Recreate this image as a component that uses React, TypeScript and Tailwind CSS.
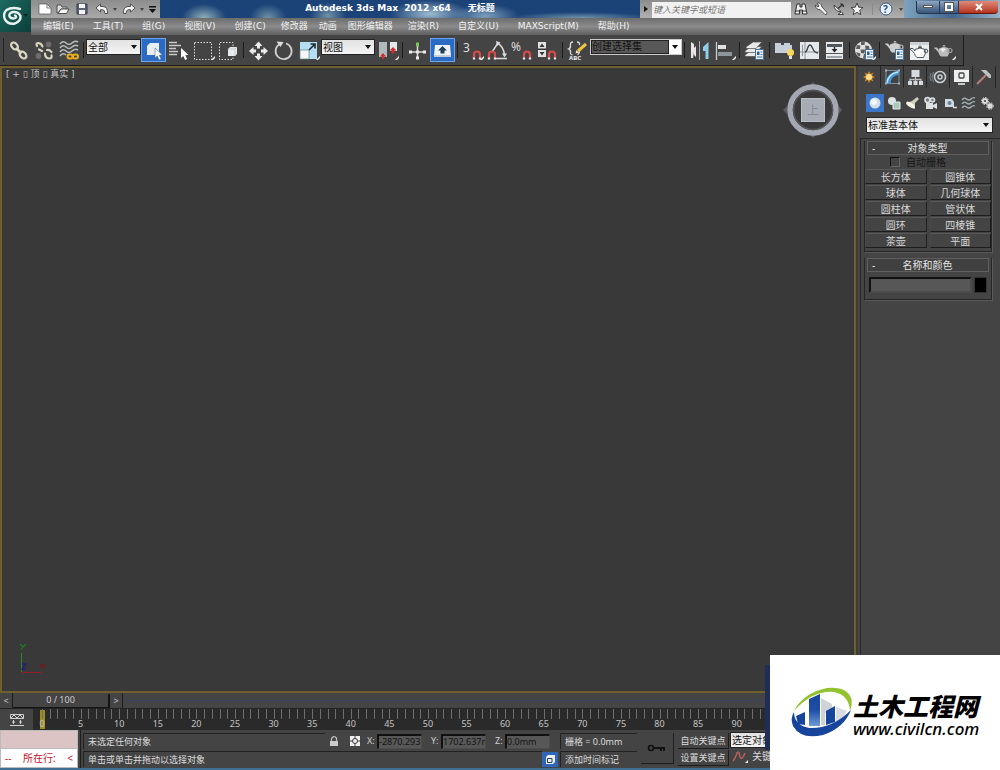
import { useState } from "react";
import type { ReactNode } from "react";
import clsx from "clsx";

// Items with an accelerator key get a little extra room on both sides
const menus = [
  { label: "编辑(E)", accel: true },
  { label: "工具(T)", accel: true },
  { label: "组(G)", accel: true },
  { label: "视图(V)", accel: true },
  { label: "创建(C)", accel: true },
  { label: "修改器" },
  { label: "动画" },
  { label: "图形编辑器" },
  { label: "渲染(R)", accel: true },
  { label: "自定义(U)", accel: true },
  { label: "MAXScript(M)", accel: true },
  { label: "帮助(H)", accel: true },
];

const objectTypes = [
  "长方体",
  "圆锥体",
  "球体",
  "几何球体",
  "圆柱体",
  "管状体",
  "圆环",
  "四棱锥",
  "茶壶",
  "平面",
];

const frames = Array.from({ length: 20 }, (_, i) => i * 5);

const cursor = "l0 10 l2.3 -2 l1.8 4 l2 -1 l-1.8 -3.8 l3 -0.4 Z";
const teapot =
  "M7 10.5 Q12 7.5 17 10.5 Q18.500 14 15.500 18.500 H9 Q7 17 6.500 14.500 L3.500 11 L2 10.500 L2.500 9.500 L5 9.500 L7 12 Z M10.500 8.500 A1.500 1.500 0 1 1 13.500 8.500 Z";

const flyout = <path d="M20 22 L24 18 V20 L22 22 Z" fill="#fff" />;
const magnet = (
  <g fill="none" strokeWidth="2.2">
    <path d="M14 21 V16.500 A3 3 0 0 1 20 16.500 V21" stroke="#d94a4a" />
    <path d="M14 19.500 V21.500 M20 19.500 V21.500" stroke="#eee" />
  </g>
);
const page = (
  <g>
    <rect x="13.500" y="11.500" width="8" height="10" fill="#eaf3fa" stroke="#4b7194" strokeWidth="1" />
    <path d="M15 13.500 H17.500 V17 H15 Z" fill="#2f5f92" />
    <path d="M18.500 14 H20.500 M18.500 16.500 H20.500 M15 19 H20.500" stroke="#4b7194" />
  </g>
);

// Main toolbar glyphs, drawn on a 25 x 25 grid
const glyphs: Record<string, ReactNode> = {
  link: (
    <g fill="none" stroke="#dcd8c2" strokeWidth="2.200">
      <ellipse cx="8.500" cy="8" rx="4" ry="2.700" transform="rotate(45 8.500 8)" />
      <ellipse cx="17" cy="17" rx="4" ry="2.700" transform="rotate(45 17 17)" />
      <path d="M10 10 L15.500 15.500" strokeWidth="2.600" />
    </g>
  ),
  unlink: (
    <g fill="none" stroke="#d8d4bd" strokeWidth="2.200" strokeLinecap="round">
      <path d="M6 8 Q4.500 5 7.500 5 Q10.500 5.500 11.500 8.500" />
      <path d="M14 15.500 Q14 20 18 20.500 Q21.500 20.500 20.500 17.500" />
      <path d="M8 11.500 L11 13 M16 12 Q19 11.500 20.500 14" />
      <circle cx="17.500" cy="6.500" r="1.800" stroke="#6d6a6a" fill="#7c7a7a" />
      <circle cx="7.500" cy="18" r="1.800" stroke="#6d6a6a" fill="#7c7a7a" />
    </g>
  ),
  bind: (
    <g fill="none">
      <path
        d="M4 6 Q7 2 10 5 T16 5 T22 4 M4 10 Q7 6 10 9 T16 9 T22 8 M4 14 Q7 10 10 13 T16 13 T22 12 M4 18 Q7 14 10 17"
        stroke="#b9bcbc"
        strokeWidth="1.600"
      />
      <rect x="11.500" y="16.500" width="5" height="4" rx="2" stroke="#e9ad22" strokeWidth="2" />
      <rect x="17" y="16.500" width="5" height="4" rx="2" stroke="#e9ad22" strokeWidth="2" />
    </g>
  ),
  select: (
    <g>
      <path d="M6 8 L9 5 H18 V14 L15 17 H6 Z" fill="#e9eef2" />
      <path d={"M14 10 " + cursor} fill="#fff" stroke="#4e6c92" strokeWidth="0.600" />
    </g>
  ),
  byName: (
    <g>
      <path d="M3 4.500 H11 M3 7.500 H15 M3 10.500 H10 M3 13.500 H12 M3 16.500 H11" stroke="#c9c9c9" strokeWidth="1.300" />
      <path d={"M15 10 " + cursor} fill="#fff" />
    </g>
  ),
  region: (
    <g>
      <rect x="3.500" y="4.500" width="17" height="17" fill="none" stroke="#ddd" strokeDasharray="1.500 1.500" />
      {flyout}
    </g>
  ),
  crossing: (
    <g>
      <path d="M17 8 V4.500 H3.500 V21.500 H17 V18" fill="none" stroke="#ddd" strokeDasharray="1.500 1.500" />
      <path d="M12 11 L14 9 H21 V16 L19 18 H12 Z" fill="#e6ebef" />
      <path d="M12 11 H19 V18 M19 11 L21 9" fill="none" stroke="#b5bfc8" strokeWidth="0.700" />
    </g>
  ),
  move: (
    <g fill="#ececec">
      <path d="M12.500 3.500 L16.500 8 H8.500 Z M12.500 22.500 L16.500 18 H8.500 Z M3 13 L7.500 9 V17 Z M22 13 L17.500 9 V17 Z" />
      <path d="M11 7.500 H14 V10.500 H11 Z M11 15.500 H14 V18.500 H11 Z M7 11.500 H10 V14.500 H7 Z M15 11.500 H18 V14.500 H15 Z" />
    </g>
  ),
  rotate: (
    <g>
      <path d="M9 6 A8 8 0 1 0 15 5.500" fill="none" stroke="#cfcfcf" strokeWidth="1.800" />
      <path d="M5.500 3.500 L12.500 4 L9.500 9 Z" fill="#ddd" />
    </g>
  ),
  scale: (
    <g>
      <rect x="4" y="4" width="17" height="17" fill="#b4def2" />
      <rect x="4" y="12" width="9" height="9" fill="#f4f6f7" stroke="#64808e" strokeWidth="0.700" />
      <path d="M13 12 L18.500 6.500 M14.500 6 H19 V10.500" fill="none" stroke="#1c2a33" strokeWidth="1.600" />
      {flyout}
    </g>
  ),
  pivot: (
    <g>
      <rect x="4" y="4" width="8" height="15" fill="#b2b9bd" />
      <rect x="15" y="4" width="7" height="9" fill="#e4e9ec" />
      <path d="M8 15 L11 18.500 H9 V21 H7 V18.500 H5 Z M18 9 L21.500 12.500 H19.500 V15.500 H16.500 V12.500 H14.500 Z" fill="#cc2d2d" />
      {flyout}
    </g>
  ),
  manipulate: (
    <g>
      <path d="M12.500 6 V20 M5 14 H20" stroke="#d8d8d8" strokeWidth="1.500" />
      <rect x="11" y="12.500" width="3" height="3" fill="#e8e8e8" />
      <path d="M4 12.500 H7 V15.500 H4 Z M18 12.500 H21 V15.500 H18 Z M11 18.500 H14 V21.500 H11 Z" fill="#ececec" />
      <rect x="11" y="4.500" width="3" height="4" fill="#78c850" />
    </g>
  ),
  keyboard: (
    <g>
      <path d="M5 7 H20 L21 18 H4 Z" fill="#f0f4f7" />
      <path d="M4 17 H21 V19 H4 Z" fill="#c1cdd8" />
      <path d="M12.500 8 L17 12.500 H14.500 V15.500 H10.500 V12.500 H8 Z" fill="#1f3c59" />
    </g>
  ),
  snap3: (
    <g>
      <text x="3" y="14" fontSize="12" fill="#ddd" fontFamily="Noto Sans">3</text>
      {magnet}
      {flyout}
    </g>
  ),
  snapAngle: (
    <g>
      <path d="M7 14 L13 5 M10 20.500 H22 M12 5 Q18.500 8 19.500 17" fill="none" stroke="#ddd" strokeWidth="1.400" />
      <path d="M11 3 L15.500 4.500 L12 8 Z M17 15.500 H22 L19.500 19.500 Z" fill="#ddd" />
      <g transform="translate(-10 0)">{magnet}</g>
    </g>
  ),
  snapPercent: (
    <g>
      <text x="1" y="13" fontSize="12" fill="#ddd" fontFamily="Noto Sans">%</text>
      {magnet}
    </g>
  ),
  snapSpinner: (
    <g>
      <rect x="3" y="4" width="8" height="15" fill="#e2e2e2" />
      <path d="M4.500 9 L7 5.500 L9.500 9 Z M4.500 14 L7 17.500 L9.500 14 Z M3 10.500 H11 V12 H3 Z" fill="#333" />
      {magnet}
    </g>
  ),
  namedSets: (
    <g>
      <path
        d="M8 4 Q5 4 5.500 7 Q6 10 3.500 11 Q6 12 5.500 14 Q5 16.500 7.500 17 M12 4 Q15 4 14.500 7 M14.500 12 Q14.500 16 12.500 16.500"
        fill="none"
        stroke="#ddd"
        strokeWidth="1.300"
      />
      <path d="M13 13 L21 6" stroke="#edc341" strokeWidth="3" />
      <path d="M10.500 15.500 L11.500 12 L14 14.500 Z" fill="#f4e2c4" />
      <text x="4" y="22" fontSize="6" fontWeight="700" fill="#eee" fontFamily="Noto Sans">ABC</text>
    </g>
  ),
  mirror: (
    <g>
      <path d="M4 4 L7 6 V10 L9 8 V19 L7 17 V14 L6 20 H4 Z" fill="#e6e6e6" />
      <path d="M12.500 3 V22" stroke="#aaa" />
      <path d="M21.500 4 L16 9 V13 H18.500 V21 H21.500 Z" fill="#8fcdec" />
    </g>
  ),
  align: (
    <g>
      <path d="M4.500 4 V22" stroke="#ccc" strokeWidth="1.300" />
      <rect x="6" y="7" width="8" height="4" fill="#dfe3e6" />
      <rect x="6" y="14" width="14" height="4" fill="#8d969d" />
      {flyout}
    </g>
  ),
  layers: (
    <g>
      <g fill="#e6e8ea" stroke="#4c4c4c" strokeWidth="0.700">
        <path d="M3 17 L9 12.500 H20 L14 18.500 H3 Z" />
        <path d="M3 13 L9 8.500 H20 L14 14.500 H3 Z" />
        <path d="M4 9 L11 4 H20 L14 10.500 H4 Z" />
      </g>
      {page}
    </g>
  ),
  ribbon: (
    <g>
      <path d="M3 7 V5 H9 V7 H12 V5 H18 V7 H20 V15 H3 Z" fill="#c6d0da" />
      <circle cx="18.500" cy="14.500" r="3.500" fill="#f8d95f" />
      <path d="M17 18 H20 V21 H17 Z" fill="#ddd" />
    </g>
  ),
  curve: (
    <g>
      <rect x="3" y="4" width="19" height="17" fill="#e4e8ea" />
      <path d="M8 4 V21 M3 14 H22 M5.500 7 V18" stroke="#8d969a" />
      <path d="M8 14 C11 14 10 7 13 7 S15 15 21 15" fill="none" stroke="#39434a" strokeWidth="1.300" />
    </g>
  ),
  schematic: (
    <g>
      <rect x="4" y="4" width="17" height="17" fill="#e8ebec" />
      <path d="M5 6 H20 V9 H5 Z M4 15 H21 V16 H4 Z" fill="#4f575c" />
      <path d="M12.500 9 V12" stroke="#333" strokeWidth="1.500" />
      <path d="M9.500 11 H15.500 L12.500 14.500 Z" fill="#222" />
      <path d="M5 18 H20 V20 H5 Z" fill="#9aa3a8" />
    </g>
  ),
  material: (
    <g>
      <circle cx="11.500" cy="12" r="8.500" fill="#e2e2e2" />
      <path
        d="M9 3.500 L13 3.500 L12.500 7 L9 7 Z M5 7 L8.500 7.500 L8 11 L4 11 Z M13 7.500 L17 8 L17.500 11.500 L13.500 11 Z M8.500 11.500 L13 11.500 L12.500 15.500 L9 15 Z M4 14 L8.500 15.500 L8 18.500 L6 18 Z M12 16 L15 16 L14 20 L11 20 Z"
        fill="#5d5d5d"
      />
      {page}
      {flyout}
    </g>
  ),
  renderSetup: (
    <g>
      <path d={teapot} fill="#cfcfcf" transform="translate(1 -4)" />
      <circle cx="19" cy="9" r="2" fill="none" stroke="#bbb" strokeWidth="1.200" />
      {page}
    </g>
  ),
  frame: (
    <g>
      <rect x="3" y="4" width="19" height="18" fill="#eceff0" />
      <path d="M3 4 H22 V7 H3 Z" fill="#cbd1d4" />
      <path d={teapot} fill="#fff" stroke="#4c555a" strokeWidth="1" transform="translate(1 1)" />
      <circle cx="19" cy="13" r="1.800" fill="none" stroke="#4c555a" />
    </g>
  ),
  render: (
    <g>
      <path d={teapot} fill="#bdbdbd" />
      <path d="M8 11 Q11 9.500 14 11 L11 14 Z" fill="#efefef" />
      <circle cx="18" cy="12.500" r="2" fill="none" stroke="#9c9c9c" strokeWidth="1.200" />
      {flyout}
    </g>
  ),
};

function Tool({ name, title, active }: { name: string; title: string; active?: boolean }) {
  return (
    <button
      title={title}
      aria-label={title}
      className={clsx("h-6 w-[25px] shrink-0", active && "border border-[#6aa5ee] bg-[#2c6bc4]")}
    >
      <svg viewBox="0 0 25 25" className={clsx("h-[25px] w-[25px]", active && "-m-px")}>
        {glyphs[name]}
      </svg>
    </button>
  );
}

function Divider() {
  return (
    <div className="flex h-6 w-[5px] shrink-0 justify-center">
      <div className="my-1 w-px bg-[#1c1c1c]" />
    </div>
  );
}

function Dropdown({ label, options, className }: { label: string; options: string[]; className: string }) {
  return (
    <div className={clsx("relative shrink-0", className)}>
      <select
        aria-label={label}
        className="block h-full w-full appearance-none border border-[#222] bg-linear-to-b from-[#e2e2e2] to-[#f4f4f4] pl-px text-[10px] leading-3 text-[#111]"
      >
        {options.map((o) => (
          <option key={o}>{o}</option>
        ))}
      </select>
      <svg viewBox="0 0 6 4" className="pointer-events-none absolute top-1/2 right-1 h-1 w-1.5 -translate-y-1/2">
        <path d="M0 0 H6 L3 4 Z" fill="#111" />
      </svg>
    </div>
  );
}

function BarButton({ title, width, children }: { title: string; width: string; children: ReactNode }) {
  return (
    <button title={title} aria-label={title} className={clsx("flex h-full items-center justify-center", width)}>
      {children}
    </button>
  );
}

function Caret() {
  return (
    <svg viewBox="0 0 4 3" className="h-[3px] w-1">
      <path d="M0 0 H4 L2 3 Z" fill="#444" />
    </svg>
  );
}

function TitleBar() {
  return (
    <div className="flex h-[18px] items-stretch">
      <div className="flex w-[129px] shrink-0 items-center bg-linear-to-b from-[#8d8d8d] to-[#a9a9a9] pl-[5px]">
        <BarButton title="新建" width="w-[18px]">
          <svg viewBox="0 0 14 12" className="h-3 w-3.5">
            <path d="M1 1 H9 L13 5 V11 H1 Z" fill="#fff" stroke="#555" strokeWidth="0.700" />
            <path d="M9 1 V5 H13" fill="none" stroke="#777" />
          </svg>
        </BarButton>
        <BarButton title="打开" width="w-[19px]">
          <svg viewBox="0 0 14 12" className="h-3 w-3.5">
            <path d="M1 10 V2 H5 L6 4 H11 V6 H5 L2 10 Z" fill="#ddd" stroke="#444" strokeWidth="0.900" />
            <path d="M2 10.500 L5 6 H13 L10.500 10.500 Z" fill="#f6f6f6" stroke="#444" strokeWidth="0.900" />
          </svg>
        </BarButton>
        <BarButton title="保存" width="w-[19px]">
          <svg viewBox="0 0 12 12" className="h-3 w-3">
            <path d="M1 1 H11 V11 H1 Z" fill="#5b6472" stroke="#333b49" />
            <path d="M3 1 H9 V5 H3 Z M3 7 H9 V11 H3 Z" fill="#f4f4f4" />
          </svg>
        </BarButton>
        <BarButton title="撤消" width="w-[22px]">
          <svg viewBox="0 0 14 12" className="h-3 w-3.5">
            <path d="M1 5 L5.500 1 V3.500 H8 Q13 4 12.500 10.500 H10 Q10 7 7.500 6.700 H5.500 V9 Z" fill="#f4f4f4" stroke="#444" strokeWidth="0.900" />
          </svg>
        </BarButton>
        <Caret />
        <BarButton title="重做" width="w-6">
          <svg viewBox="0 0 14 12" className="h-3 w-3.5">
            <path d="M13 5 L8.500 1 V3.500 H6 Q1 4 1.500 10.500 H4 Q4 7 6.500 6.700 H8.500 V9 Z" fill="#f4f4f4" stroke="#444" strokeWidth="0.900" />
          </svg>
        </BarButton>
        <Caret />
        <BarButton title="自定义快速访问工具栏" width="w-4">
          <svg viewBox="0 0 7 7" className="h-[7px] w-[7px]">
            <path d="M0 0 H7 V1.500 H0 Z M0 3 H7 L3.500 7 Z" fill="#111" />
          </svg>
        </BarButton>
      </div>
      <h1 className="flex min-w-0 flex-1 items-center justify-center gap-[17px] bg-[#1c4378] bg-[radial-gradient(ellipse_22px_14px_at_44px_18px,#8fb0b8,transparent),radial-gradient(ellipse_18px_14px_at_108px_18px,#6f92a6,transparent),radial-gradient(ellipse_18px_14px_at_168px_16px,#6f92a6,transparent),radial-gradient(ellipse_40px_14px_at_270px_14px,#9dbccf,transparent),radial-gradient(ellipse_34px_12px_at_325px_16px,#7d9fbc,transparent),radial-gradient(ellipse_70px_6px_at_420px_18px,#6f95ad,transparent)] font-['DejaVu_Sans','Noto_Sans_CJK_SC',sans-serif] text-[9px] font-bold text-white">
        <span className="whitespace-pre">{"Autodesk 3ds Max  2012 x64"}</span>
        <span>无标题</span>
      </h1>
      <div className="flex w-[264px] shrink-0 items-center bg-linear-to-b from-[#8d8d8d] to-[#b0b0b0]">
        <BarButton title="信息中心" width="w-3">
          <svg viewBox="0 0 4 6" className="h-1.5 w-1">
            <path d="M0 0 L4 3 L0 6 Z" fill="#111" />
          </svg>
        </BarButton>
        <input
          aria-label="搜索"
          placeholder="键入关键字或短语"
          className="mt-px h-4 w-[139px] bg-[#f1f1f1] pl-px text-[9px] italic placeholder:text-[#777]"
        />
        <BarButton title="搜索" width="w-5">
          <svg viewBox="0 0 14 14" className="h-3.5 w-3.5">
            <path d="M3 2 H6 V5 H8 V2 H11 L13 12 H8.500 V8 H5.500 V12 H1 Z" fill="#eee" stroke="#333" />
            <path d="M1.500 9 H5.500 M8.500 9 H12.500" stroke="#333" />
          </svg>
        </BarButton>
        <BarButton title="速博应用中心" width="w-[19px]">
          <svg viewBox="0 0 14 14" className="h-3.5 w-3.5">
            <path d="M1 3 L4 5 L5 4 L3 1 Q7 0 8 5 L13 10.500 Q13 13 11 12.500 L6 7.500 Q2 8 1 3 Z" fill="#f4f4f4" stroke="#444" strokeWidth="0.900" />
          </svg>
        </BarButton>
        <BarButton title="通讯中心" width="w-[18px]">
          <svg viewBox="0 0 14 14" className="h-3.5 w-3.5">
            <path d="M2 3 Q2 9 9 10 L6 12.500 H11.500 L9 9.500 Z" fill="#f4f4f4" stroke="#333" strokeWidth="0.900" />
            <path d="M6 6.500 L10 3 M8.500 2 Q11.500 2 11.500 5" fill="none" stroke="#333" strokeWidth="1.300" />
          </svg>
        </BarButton>
        <BarButton title="收藏夹" width="w-[18px]">
          <svg viewBox="0 0 14 14" className="h-3.5 w-3.5">
            <path d="M7 1 L8.700 5.200 L13 5.500 L9.700 8.300 L10.800 12.700 L7 10.300 L3.200 12.700 L4.300 8.300 L1 5.500 L5.300 5.200 Z" fill="#f4f4f4" stroke="#444" />
          </svg>
        </BarButton>
        <div className="ml-1.5 h-3 w-px bg-[#8a8a8a]" />
        <BarButton title="帮助" width="w-[26px]">
          <svg viewBox="0 0 14 14" className="h-3.5 w-3.5">
            <circle cx="7" cy="7" r="6" fill="#e9f1fa" stroke="#3b5c86" />
            <text x="4" y="11" fontSize="10" fontWeight="700" fill="#1f4e8c" fontFamily="Noto Sans">?</text>
          </svg>
        </BarButton>
        <Caret />
      </div>
      <div className="flex w-24 shrink-0 items-start bg-linear-to-r from-[#7fa3bd] via-[#41658f] to-[#9ab4c6] pr-0.5 pl-3">
        <BarButton title="最小化" width="w-6">
          <span className="mb-1 flex h-[13px] w-full items-center justify-center rounded-bl border border-t-0 border-[#26384f] bg-linear-to-b from-[#8fa6c0] to-[#38557c]">
            <span className="h-[3px] w-2.5 border border-[#555] bg-white" />
          </span>
        </BarButton>
        <BarButton title="还原" width="w-[19px]">
          <span className="mb-1 flex h-[13px] w-full items-center justify-center border-r border-b border-[#26384f] bg-linear-to-b from-[#8fa6c0] to-[#38557c]">
            <span className="h-2 w-2 border-2 border-white outline outline-[#555]" />
          </span>
        </BarButton>
        <BarButton title="关闭" width="w-[39px]">
          <span className="mb-1 flex h-[13px] w-full items-center justify-center rounded-br border-b border-[#5c1a12] bg-linear-to-b from-[#dd8a79] to-[#b5301a]">
            <svg viewBox="0 0 8 8" className="h-2 w-2">
              <path d="M1 1 L7 7 M7 1 L1 7" stroke="#fff" strokeWidth="2" />
            </svg>
          </span>
        </BarButton>
      </div>
    </div>
  );
}

function Header() {
  return (
    <header className="flex">
      <button
        aria-label="应用程序菜单"
        className="flex h-8 w-[31px] shrink-0 items-center justify-center bg-linear-to-br from-[#1c6b60] to-[#0c3f3b]"
      >
        <svg viewBox="0 0 31 32" className="h-8 w-[31px]">
          <path
            d="M20 9 Q12 6.500 6.500 10 Q2.500 14 5 19.500 Q8.500 25 15 23.500 Q21 21 20.500 16 Q18.500 11.500 13 12 Q8.500 13 9.500 16.500 Q11.500 19.500 15.500 18 Q17 16.500 15 15.500"
            fill="none"
            stroke="#e8f3ef"
            strokeWidth="2.400"
            strokeLinecap="round"
          />
          <path d="M23.500 14 H28 L25.750 17 Z" fill="#0a2320" />
        </svg>
      </button>
      <div className="min-w-0 flex-1">
        <TitleBar />
        <nav className="flex h-[17px] items-center gap-[11px] bg-linear-to-b from-[#6d6d6d] via-[#8b8b8b] to-[#5f5f5f] pl-2 font-['DejaVu_Sans','Noto_Sans_CJK_SC',sans-serif] text-[9px] whitespace-nowrap text-[#f2f2f2]">
          {menus.map((m) => (
            <button key={m.label} className={clsx(m.accel && "px-1")}>
              {m.label}
            </button>
          ))}
        </nav>
      </div>
    </header>
  );
}

function Toolbar() {
  return (
    <div className="flex h-[31px] items-center bg-[#444]">
      <div className="flex h-full w-[964px] items-center border-r border-b border-[#1d1d1d]">
        <div className="mr-0.5 ml-[3px] h-6 w-px bg-[#222]" />
        <Tool name="link" title="选择并链接" />
        <Tool name="unlink" title="断开当前选择链接" />
        <Tool name="bind" title="绑定到空间扭曲" />
        <Divider />
        <Dropdown label="选择过滤器" options={["全部"]} className="mb-[7px] h-4 w-[55px]" />
        <Tool name="select" title="选择对象" active />
        <Tool name="byName" title="按名称选择" />
        <Tool name="region" title="矩形选择区域" />
        <Tool name="crossing" title="窗口/交叉" />
        <Divider />
        <Tool name="move" title="选择并移动" />
        <Tool name="rotate" title="选择并旋转" />
        <Tool name="scale" title="选择并均匀缩放" />
        <Dropdown label="参考坐标系" options={["视图"]} className="mb-[7px] h-4 w-[54px]" />
        <Tool name="pivot" title="使用轴点中心" />
        <Divider />
        <Tool name="manipulate" title="选择并操纵" />
        <Tool name="keyboard" title="键盘快捷键覆盖切换" active />
        <Divider />
        <Tool name="snap3" title="捕捉开关" />
        <Tool name="snapAngle" title="角度捕捉切换" />
        <Tool name="snapPercent" title="百分比捕捉切换" />
        <Tool name="snapSpinner" title="微调器捕捉切换" />
        <Divider />
        <Tool name="namedSets" title="编辑命名选择集" />
        <div className="mb-[7px] flex h-4 w-[92px] shrink-0 border border-[#ccc] bg-[#585858]">
          <input
            aria-label="命名选择集"
            defaultValue="创建选择集"
            className="min-w-0 flex-1 border border-[#222] text-[10px] text-[#111]"
          />
          <button aria-label="展开选择集" className="flex w-3 items-center justify-center bg-white">
            <svg viewBox="0 0 6 4" className="h-1 w-1.5">
              <path d="M0 0 H6 L3 4 Z" fill="#111" />
            </svg>
          </button>
        </div>
        <Divider />
        <Tool name="mirror" title="镜像" />
        <Tool name="align" title="对齐" />
        <Divider />
        <Tool name="layers" title="层管理器" />
        <Divider />
        <Tool name="ribbon" title="石墨建模工具" />
        <Tool name="curve" title="曲线编辑器" />
        <Tool name="schematic" title="图解视图" />
        <Divider />
        <Tool name="material" title="材质编辑器" />
        <Divider />
        <Tool name="renderSetup" title="渲染设置" />
        <Tool name="frame" title="渲染帧窗口" />
        <Tool name="render" title="渲染产品" />
      </div>
    </div>
  );
}

function Viewport() {
  return (
    <main className="relative min-w-0 flex-1 border-2 border-[#70602c] bg-[#393939]">
      <p className="px-1 font-['DejaVu_Sans','Noto_Sans_CJK_SC',sans-serif] text-[9px] leading-3 text-[#c4c4c4]">
        [ + ▯ 顶 ▯ 真实 ]
      </p>
      {/* ViewCube */}
      <svg viewBox="0 0 60 60" className="absolute top-3 right-3 h-[60px] w-[60px]">
        <path d="M31 2 L35 6 H27 Z M31 58 L35 54 H27 Z M1 30 L5 26 V34 Z M60 30 L57 26 V34 Z" fill="#5b5d63" />
        <circle cx="31" cy="30" r="23" fill="none" stroke="#a4a8b2" strokeWidth="5.500" />
        <circle cx="31" cy="30" r="19.500" fill="none" stroke="#55575a" strokeWidth="1.500" />
        <rect x="19.500" y="18.500" width="23" height="23" fill="#a6abb4" stroke="#b9bdc5" strokeWidth="1" />
        <text x="25" y="35" fontSize="12" fill="#858b97" fontFamily="Noto Sans CJK SC">上</text>
      </svg>
      {/* World axis */}
      <svg viewBox="0 0 30 34" className="absolute bottom-4 left-4 h-[34px] w-[30px]">
        <path d="M3.500 12 V31" stroke="#2a8a2a" />
        <path d="M4 31.500 H24" stroke="#8f1d22" />
        <path d="M2 3 L5 6 L8 3 M5 6 L3 9" fill="none" stroke="#1c7a22" strokeWidth="1.300" />
        <path d="M22 23 L27 27 M27 23 L22 27" fill="none" stroke="#74191d" strokeWidth="1.300" />
        <path d="M4 23 H8 L4 28 H8" fill="none" stroke="#20207a" strokeWidth="1.300" />
      </svg>
    </main>
  );
}

const panelTabs: { title: string; icon: ReactNode }[] = [
  {
    title: "创建",
    icon: (
      <g>
        <path d="M10 4 L11.500 7 L14.500 5.500 L13 8.500 L16 10 L13 11.500 L14.500 14.500 L11.500 13 L10 16 L8.500 13 L5.500 14.500 L7 11.500 L4 10 L7 8.500 L5.500 5.500 L8.500 7 Z" fill="#d98a2b" />
        <circle cx="10" cy="10" r="3" fill="#ffe08a" />
      </g>
    ),
  },
  {
    title: "修改",
    icon: (
      <g>
        <rect x="4" y="3.500" width="13" height="13" fill="none" stroke="#7f8f9c" />
        <path d="M4 16.500 Q4 5.500 17 3.500 V7.500 Q8.500 9 8.500 16.500 Z" fill="#3f98dc" />
        <path d="M5 16 Q6 7 16 5" fill="none" stroke="#c4e4fa" strokeWidth="1.300" />
        <path d="M3 2.500 H5 V4.500 H3 Z M16 2.500 H18 V4.500 H16 Z M3 15.500 H5 V17.500 H3 Z M16 15.500 H18 V17.500 H16 Z" fill="#a9b4bd" />
      </g>
    ),
  },
  {
    title: "层次",
    icon: (
      <g fill="#d5dade">
        <rect x="6.500" y="3" width="8" height="7" />
        <path d="M10.500 10 V14 M5 15 V12.500 H16 V15" fill="none" stroke="#bbb" strokeWidth="1.300" />
        <path d="M3 14 H7 V18 H3 Z M8.500 14 H12.500 V18 H8.500 Z M14 14 H18 V18 H14 Z" />
      </g>
    ),
  },
  {
    title: "运动",
    icon: (
      <g fill="none" stroke="#c6ccd2">
        <circle cx="12" cy="10" r="5.500" strokeWidth="1.600" />
        <circle cx="12" cy="10" r="2" strokeWidth="1.600" />
        <path d="M5.500 5 Q3 10 5.500 15 M3 6 Q1 10 3 14" stroke="#7e868d" />
      </g>
    ),
  },
  {
    title: "显示",
    icon: (
      <g>
        <rect x="3" y="3" width="15" height="12" fill="#eceff0" />
        <rect x="8" y="6" width="5" height="5" rx="1" fill="none" stroke="#444" strokeWidth="1.300" />
        <path d="M7 16 H14 V18 H7 Z" fill="#c5cacd" />
      </g>
    ),
  },
  {
    title: "工具",
    icon: (
      <g>
        <path d="M3 17 L12 8" stroke="#b87f78" strokeWidth="2" />
        <path d="M7 3 L12 3 L17 8 L17 11 L15 11 L11 7 Z" fill="#bfc3c6" />
      </g>
    ),
  },
];

const categories: { title: string; icon: ReactNode }[] = [
  {
    title: "几何体",
    icon: (
      <g>
        <circle cx="9" cy="9" r="5.500" fill="#d3dee9" />
        <circle cx="8" cy="8" r="3" fill="#f6f9fb" />
      </g>
    ),
  },
  {
    title: "图形",
    icon: (
      <g>
        <circle cx="7" cy="7" r="4" fill="#dde3e7" />
        <path d="M8 8 H15 V15 H8 Z" fill="#a9c9b9" stroke="#e6ebee" />
      </g>
    ),
  },
  {
    title: "灯光",
    icon: (
      <g>
        <path d="M14 3 L16 5 L12 9 L12 15 L3 9 L9 7 Z" fill="#d0cdba" />
        <ellipse cx="7.500" cy="11" rx="5" ry="2" fill="#f7f5e6" transform="rotate(35 7.500 11)" />
      </g>
    ),
  },
  {
    title: "摄影机",
    icon: (
      <g>
        <path d="M4 9 H11 V15 H4 Z M11 11 L15 9 V15 L11 13 Z" fill="#dde1e4" />
        <circle cx="5.500" cy="6" r="2.500" fill="#777" stroke="#dde1e4" strokeWidth="1.600" />
        <circle cx="10.500" cy="6" r="2" fill="#777" stroke="#dde1e4" strokeWidth="1.600" />
      </g>
    ),
  },
  {
    title: "辅助对象",
    icon: (
      <g>
        <path d="M4 5 H11 L13 8 V13 H4 Z" fill="#cfd9e2" />
        <circle cx="8.500" cy="9" r="2" fill="#6c8296" />
        <path d="M12 13.500 H16" stroke="#ddd" strokeWidth="1.500" />
      </g>
    ),
  },
  {
    title: "空间扭曲",
    icon: (
      <path
        d="M3 6 Q5 3 7.500 5 T12 5 T16 4 M3 10 Q5 7 7.500 9 T12 9 T16 8 M3 14 Q5 11 7.500 13 T12 13 T16 12"
        fill="none"
        stroke="#a7b1b6"
        strokeWidth="1.300"
      />
    ),
  },
  {
    title: "系统",
    icon: (
      <g fill="none" stroke="#dcdcdc">
        <circle cx="7" cy="7" r="2" strokeWidth="2" />
        <circle cx="7" cy="7" r="3.500" strokeDasharray="1.500 1.200" />
        <circle cx="12" cy="12" r="1.500" strokeWidth="2.500" />
        <circle cx="12" cy="12" r="3.300" strokeDasharray="1.500 1.200" />
      </g>
    ),
  },
];

function Rollout({ title, children }: { title: string; children: ReactNode }) {
  return (
    <section className="border border-t-0 border-[#262626] shadow-[1px_1px_0_#5a5a5a]">
      <h2 className="mx-0.5">
        <button className="flex h-3.5 w-full items-center border border-[#5f5f5f] bg-[#404040] px-1 text-[10px] leading-3 text-[#e4e4e4]">
          <span>-</span>
          <span className="flex-1 pr-1 text-center">{title}</span>
        </button>
      </h2>
      {children}
    </section>
  );
}

function CommandPanel() {
  const [category, setCategory] = useState("几何体");
  return (
    <aside className="flex w-[144px] shrink-0 flex-col border-l-2 border-[#3c3c3c] bg-[#444]">
      <div className="flex h-[22px]">
        {panelTabs.map((t) => (
          <button
            key={t.title}
            title={t.title}
            aria-label={t.title}
            className="flex w-[23px] items-center justify-center border-r border-[#262626]"
          >
            <svg viewBox="0 0 20 20" className="h-5 w-5">
              {t.icon}
            </svg>
          </button>
        ))}
      </div>
      <div className="mt-1.5 flex justify-between pr-1 pl-2">
        {categories.map((c) => (
          <button
            key={c.title}
            title={c.title}
            aria-label={c.title}
            onClick={() => setCategory(c.title)}
            className={clsx("h-[18px] w-[18px]", category === c.title && "bg-[#3b76c9]")}
          >
            <svg viewBox="0 0 18 18" className="h-[18px] w-[18px]">
              {c.icon}
            </svg>
          </button>
        ))}
      </div>
      <Dropdown label="对象类别" options={["标准基本体"]} className="mt-[5px] mr-[7px] ml-2 h-4" />
      <div className="mt-[5px] ml-0.5 flex flex-1 flex-col gap-1.5 border-t border-l border-[#2a2a2a] pt-0.5 pr-2 pl-[3px]">
        <Rollout title="对象类型">
          <label className="flex h-3.5 items-center justify-center gap-1.5 pr-5 text-[10px] text-[#161616]">
            <input
              type="checkbox"
              className="h-2.5 w-2.5 appearance-none border border-t-[#111] border-r-[#666] border-b-[#666] border-l-[#111]"
            />
            自动栅格
          </label>
          <div className="grid grid-cols-2 gap-x-[3px] gap-y-px pb-[3px]">
            {objectTypes.map((o) => (
              <button
                key={o}
                className="h-[15px] border border-t-[#585858] border-r-[#1d1d1d] border-b-[#1d1d1d] border-l-[#4a4a4a] text-[10px] leading-3 text-[#d8d8d8]"
              >
                {o}
              </button>
            ))}
          </div>
        </Rollout>
        <Rollout title="名称和颜色">
          <div className="flex gap-0.5 p-1 pt-[5px] pb-1.5">
            <input
              aria-label="名称"
              className="h-4 min-w-0 flex-1 border-2 border-t-[#111] border-r-[#4c4c4c] border-b-[#4c4c4c] border-l-[#111] bg-[#575757]"
            />
            <button aria-label="颜色" className="h-4 w-[13px] border border-[#333] bg-black" />
          </div>
        </Rollout>
      </div>
    </aside>
  );
}

function TimeSlider() {
  return (
    <div className="flex h-4 items-center border-b border-[#222] bg-[#444] text-[9px] leading-3 text-[#ccc]">
      <button aria-label="上一帧" className="h-full w-[13px] border-r border-[#1d1d1d]">
        &lt;
      </button>
      <button className="h-3.5 w-[97px] border-r-2 border-b border-[#151515]">0 / 100</button>
      <button aria-label="下一帧" className="h-full w-[13px] border-r border-[#1d1d1d]">
        &gt;
      </button>
      <div className="h-px flex-1 bg-[#3d425c]" />
    </div>
  );
}

function TrackBar() {
  return (
    <div className="flex h-[21px] bg-[#2a2a2a]">
      <button aria-label="迷你曲线编辑器" className="flex w-[33px] items-center justify-center bg-[#444]">
        <svg viewBox="0 0 16 14" className="h-3.5 w-4">
          <path d="M1.500 1.500 H14.500 V5.500 H1.500 Z M2 5 L5 2 L8 5 L11 2 L14 5 M1 12.500 H15 M4.500 7 V11 M11.500 7 V11 M3 9 H6 M10 9 H13" fill="none" stroke="#d0d0d0" strokeWidth="1" />
        </svg>
      </button>
      <div className="relative mr-[186px] ml-[9px] flex flex-1">
        <div className="absolute top-px bottom-px -left-0.5 w-[5px] bg-[#9d8c20]" />
        {frames.map((f) => (
          <div key={f} className="relative flex-1 text-[9px] leading-[9px] text-[#c4c4c4]">
            <div className="flex h-2.5">
              {[0, 1, 2, 3, 4].map((t) => (
                <div key={t} className="flex-1 border-l border-[#6e6e6e]" />
              ))}
            </div>
            <span className="inline-block -translate-x-1/2">{f}</span>
          </div>
        ))}
      </div>
    </div>
  );
}

function Coordinate({ axis, value }: { axis: string; value: string }) {
  return (
    <label className="flex items-center gap-px text-[#d0d0d0]">
      <span className="w-[9px]">{axis}:</span>
      <input
        defaultValue={value}
        className="h-[15px] w-[45px] border border-t-2 border-l-2 border-t-[#111] border-r-[#4c4c4c] border-b-[#4c4c4c] border-l-[#111] bg-[#575757] text-[#161616]"
      />
    </label>
  );
}

function StatusBar() {
  return (
    <footer className="flex h-[38px] bg-[#444] text-[9px] leading-3 whitespace-nowrap text-[#dcdcdc]">
      <div className="flex w-[78px] shrink-0 flex-col gap-px border border-[#bbb] bg-[#bbb]">
        <div className="h-[17px] bg-[#dcc3c4]" />
        <div className="flex flex-1 items-center justify-between bg-white px-1 text-[10px] text-[#c8102e]">
          <span>--</span>
          <span>所在行:</span>
          <span>&lt;</span>
        </div>
      </div>
      <div className="mx-0.5 w-px shrink-0 bg-[#1d1d1d]" />
      <div className="flex w-[477px] shrink-0 flex-col pt-0.5">
        <div className="flex h-[18px] items-center">
          <p className="mr-1 h-4 w-[242px] border-t border-l border-[#222] px-1 leading-4">未选定任何对象</p>
          <button aria-label="选择锁定切换">
            <svg viewBox="0 0 10 12" className="h-3 w-2.5">
              <path d="M2.500 6 V3.500 Q5 0 7.500 3 V6" fill="none" stroke="#bbb" strokeWidth="1.300" />
              <path d="M1 6 H9 V11 H1 Z" fill="#ccc" />
            </svg>
          </button>
          <button aria-label="绝对模式变换输入" className="mr-1.5 ml-2.5">
            <svg viewBox="0 0 12 12" className="h-3 w-3">
              <rect x="1" y="1" width="10" height="10" fill="#eee" />
              <circle cx="6" cy="6" r="2.500" fill="none" stroke="#333" />
              <path d="M6 0 V3 M6 9 V12 M0 6 H3 M9 6 H12" stroke="#444" />
            </svg>
          </button>
          <div className="flex gap-[9px]">
            <Coordinate axis="X" value="-2870.293mm" />
            <Coordinate axis="Y" value="1702.637mm" />
            <Coordinate axis="Z" value="0.0mm" />
          </div>
        </div>
        <div className="flex flex-1 items-center">
          <p className="h-4 flex-1 border-t border-l border-[#222] px-1 leading-4">单击或单击并拖动以选择对象</p>
          <button aria-label="自适应降级" className="flex h-[15px] w-4 items-center justify-center bg-[#2f66b8]">
            <svg viewBox="0 0 12 12" className="h-3 w-3">
              <path d="M2 4 L4 2 H11 V9 L9 11 H2 Z" fill="#e8eef3" />
              <path d="M3.500 5.500 H8 V9.500 H3.500 Z" fill="none" stroke="#2a3a4a" />
            </svg>
          </button>
          <div className="w-0.5" />
        </div>
      </div>
      <div className="flex w-[77px] shrink-0 flex-col gap-0.5 pt-[3px]">
        <p className="h-4 border-t border-l border-[#222] px-1 leading-4">栅格 = 0.0mm</p>
        <p className="h-4 border-t border-l border-[#222] px-1 leading-4">添加时间标记</p>
      </div>
      <button
        aria-label="设置关键点"
        className="mt-[3px] mb-1 ml-1 flex w-[33px] shrink-0 items-center justify-center border-r border-b border-[#1d1d1d]"
      >
        <svg viewBox="0 0 20 10" className="h-2.5 w-5">
          <circle cx="4" cy="5" r="2.500" fill="none" stroke="#111" strokeWidth="1.600" />
          <path d="M7 5 H18 M14 5 V8 M17 5 V8" stroke="#111" strokeWidth="1.800" />
        </svg>
      </button>
      <div className="ml-1 flex w-[51px] shrink-0 flex-col gap-px pt-[3px]">
        <button className="h-4 border-r border-b border-[#1d1d1d] text-[9px]">自动关键点</button>
        <button className="h-4 border-r border-b border-[#1d1d1d] text-[9px]">设置关键点</button>
      </div>
      <div className="ml-px flex w-[90px] shrink-0 flex-col gap-px pt-0.5">
        <Dropdown label="关键点集" options={["选定对象"]} className="h-4" />
        <div className="flex items-center gap-1 text-[10px]">
          <button aria-label="新建关键点的默认入/出切线">
            <svg viewBox="0 0 18 14" className="h-3.5 w-[18px]">
              <path d="M3 12 Q5 10 7 4 Q9 1 10 8 Q12 12 15 4" fill="none" stroke="#b8605c" strokeWidth="1.500" />
              <path d="M15 14 L18 11 V14 Z" fill="#eee" />
            </svg>
          </button>
          <button>关键</button>
        </div>
      </div>
    </footer>
  );
}

function Watermark() {
  return (
    <div className="absolute right-0 bottom-0 flex items-end">
      <div className="mb-5 h-[85px] w-[5px] bg-[#1f2d58]" />
      <a
        href="http://www.civilcn.com"
        className="flex h-[115px] w-[230px] items-center bg-white pl-[19px] text-black"
      >
        <svg viewBox="0 0 64 54" className="h-[54px] w-16 shrink-0">
          <defs>
            <linearGradient id="tower" x1="0" y1="0" x2="0" y2="1">
              <stop offset="0" stopColor="#17459c" />
              <stop offset="0.500" stopColor="#1d4da5" />
              <stop offset="1" stopColor="#6f9bd6" />
            </linearGradient>
          </defs>
          <path d="M32 12 L43 18 V23 L36 27 V39 H32 Z" fill="#cfd3d8" />
          <path d="M47 21 L58 25 L53 33 L47 36 Z" fill="#d8dbdf" />
          <path d="M20 13 L31 8 V40 H20 Z" fill="url(#tower)" />
          <path d="M7 30 L16 26 V39 L9 38 Z" fill="#17459c" />
          <path d="M37 25 L46 20 V36 L37 39 Z" fill="#17459c" />
          <path d="M5 25 Q14 7 38 2 Q58 0 62.500 13 Q63.500 19 61 25 Q60 9 45 6 Q24 4 5 25 Z" fill="#93c22e" />
          <path d="M5 26 Q5 39 20 42 Q43 43 62 24 Q55 42 34 49 Q12 54 4 40 Q1 32 5 26 Z" fill="#17459c" />
        </svg>
        <span className="flex flex-col gap-1 pt-1.5">
          <span className="text-[25px] leading-[22px] font-black italic">土木工程网</span>
          <span className="text-[17px] leading-4 font-medium italic">www.civilcn.com</span>
        </span>
      </a>
    </div>
  );
}

export default function App() {
  return (
    <div
      lang="zh-CN"
      className="relative flex h-screen flex-col overflow-hidden bg-[#444] font-['Noto_Sans','Noto_Sans_CJK_SC',sans-serif]"
    >
      <Header />
      <Toolbar />
      <div className="flex min-h-0 flex-1">
        <Viewport />
        <CommandPanel />
      </div>
      <TimeSlider />
      <TrackBar />
      <StatusBar />
      <div className="h-0.5 bg-[#3f6f93]" />
      <Watermark />
    </div>
  );
}
